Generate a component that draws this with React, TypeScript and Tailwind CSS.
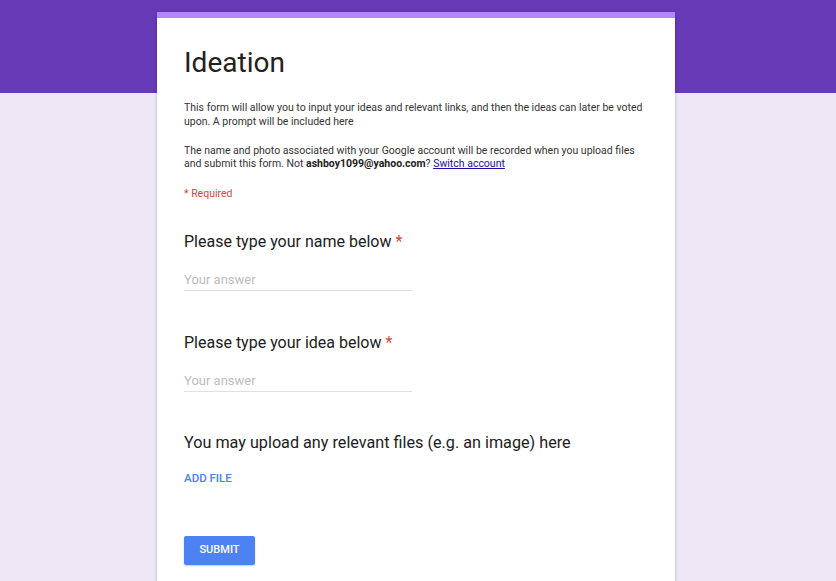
export default function App() {
  return (
    <div className="h-[581px] overflow-hidden bg-[#ede7f6] font-['Roboto',sans-serif]">
      {/* Header band */}
      <div className="h-[93px] bg-[#673ab7]" />

      {/* Form card */}
      <div className="ml-[157px] -mt-[81px] w-[518px] bg-white border-t-[6px] border-[#b388ff] shadow-[0_1px_3px_rgba(0,0,0,0.25)] pb-10">
        <div className="px-[27px] pt-[27px]">
          <h1 className="text-[28px] leading-[36px] text-[#212121]">Ideation</h1>
          <p className="mt-[20px] text-[10.5px] leading-[14px] text-[#333]">
            This form will allow you to input your ideas and relevant links, and then the ideas can later be voted
            upon. A prompt will be included here
          </p>
          <p className="mt-[15px] text-[10.5px] leading-[13px] text-[#333]">
            The name and photo associated with your Google account will be recorded when you upload files and
            submit this form. Not <b className="text-[#212121]">ashboy1099@yahoo.com</b>?{' '}
            <a className="text-[#1a0dab] underline">Switch account</a>
          </p>
          <p className="mt-[17px] text-[10.5px] leading-[14px] text-[#db4437]">* Required</p>
        </div>

        <div className="px-[27px]">
          <Question label="Please type your name below" required className="mt-[31px]" />
          <Question label="Please type your idea below" required className="mt-[42px]" />

          <div className="mt-[41px]">
            <div className="text-[16.2px] leading-[20px] text-[#212121]">
              You may upload any relevant files (e.g. an image) here
            </div>
            <button className="block mt-[18px] text-[11.5px] leading-[14px] font-medium uppercase text-[#4285f4]">
              Add file
            </button>
          </div>

          <button className="block mt-[51px] w-[71px] h-[29px] rounded-[2px] bg-[#4d82f3] text-white text-[11px] font-medium uppercase shadow-[0_1px_2px_rgba(0,0,0,0.2)]">
            Submit
          </button>
        </div>
      </div>
    </div>
  )
}

function Question({ label, required, className }: { label: string; required?: boolean; className?: string }) {
  return (
    <div className={className}>
      <div className="text-[16px] leading-[20px] text-[#212121]">
        {label}
        {required && <span className="text-[#db4437]"> *</span>}
      </div>
      <div className="mt-[20px] w-[228px] border-b border-[#e0e0e0] pb-[2px] text-[13px] leading-[16px] text-[#bdbdbd]">
        Your answer
      </div>
    </div>
  )
}
